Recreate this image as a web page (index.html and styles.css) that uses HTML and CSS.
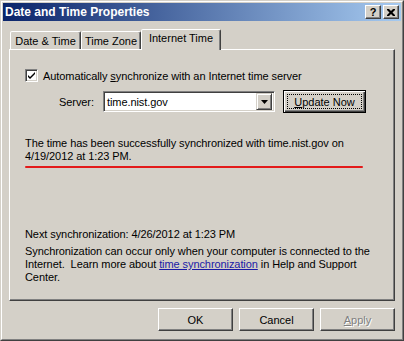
FILE: index.html
```
<!DOCTYPE html>
<html lang="en">
  <head>
    <meta charset="UTF-8" />
    <meta name="viewport" content="width=device-width, initial-scale=1.0" />
    <title>Date and Time Properties</title>
    <link rel="stylesheet" href="styles.css">
  </head>

  <body>
    <div class="window">
      <div class="frame">
        <div class="titlebar">
          <span class="title">Date and Time Properties</span>
          <div class="title-btns">
            <span class="tbtn help">?</span>
            <span class="tbtn">
              <svg width="8" height="7" viewBox="0 0 8 7">
                <path d="M0 0h2l2 2 2-2h2v1l-2.5 2.5L8 6v1H6L4 5 2 7H0V6l2.5-2.5L0 1z" fill="#000" />
              </svg>
            </span>
          </div>
        </div>

        <div class="content">
          <div class="tabs">
            <div class="tab tab-date">Date &amp; Time</div>
            <div class="tab tab-zone">Time Zone</div>
            <div class="tab tab-net active">Internet Time</div>
          </div>

          <div class="panel">
            <div class="check-row">
              <span class="checkbox">
                <svg width="7" height="7" viewBox="0 0 7 7">
                  <path d="M0 2l2 2 5-5v2L2 6 0 4z" fill="#000" transform="translate(0 1)" />
                </svg>
              </span>
              <span>Automatically <u>s</u>ynchronize with an Internet time server</span>
            </div>

            <div class="server-row">
              <span class="label">Server:</span>
              <div class="combo">
                <span class="combo-text">time.nist.gov</span>
                <span class="combo-btn">
                  <svg width="7" height="4" viewBox="0 0 7 4">
                    <path d="M0 0h7L3.5 4z" fill="#000" />
                  </svg>
                </span>
              </div>
              <button class="btn focused"><u>U</u>pdate Now</button>
            </div>

            <p class="status">
              The time has been successfully synchronized with time.nist.gov on<br />
              4/19/2012 at 1:23 PM.
            </p>
            <div class="red-line"></div>

            <p class="next">Next synchronization: 4/26/2012 at 1:23 PM</p>
            <p class="note">
              Synchronization can occur only when your computer is connected to the<br />
              Internet.&nbsp; Learn more about <a href="#">time synchronization</a> in Help and Support<br />
              Center.
            </p>
          </div>

          <div class="actions">
            <button class="btn">OK</button>
            <button class="btn">Cancel</button>
            <button class="btn disabled"><u>A</u>pply</button>
          </div>
        </div>
      </div>
    </div>
  </body>
</html>
```

FILE: styles.css
```
body {
  margin: 0;
  background-color: #d4d0c8;
  font-family: "Liberation Sans", Arial, sans-serif;
  font-size: 11px;
  color: #000;
}

.window {
  box-sizing: border-box;
  width: 404px;
  height: 341px;
  border: 1px solid;
  border-color: #d4d0c8 #404040 #404040 #d4d0c8;
}

.frame {
  box-sizing: border-box;
  height: 100%;
  padding: 1px;
  border: 1px solid;
  border-color: #fff #808080 #808080 #fff;
  display: flex;
  flex-direction: column;
}

.titlebar {
  height: 18px;
  display: flex;
  align-items: center;
  justify-content: space-between;
  padding-left: 2px;
  background: linear-gradient(to right, #0a246a, #a6caf0);
}

.title {
  color: #fff;
  font-weight: bold;
  font-size: 12px;
}

.title-btns {
  display: flex;
  gap: 2px;
  margin-right: 2px;
}

.tbtn {
  box-sizing: border-box;
  width: 16px;
  height: 14px;
  display: flex;
  align-items: center;
  justify-content: center;
  background-color: #d4d0c8;
  border: 1px solid;
  border-color: #fff #404040 #404040 #fff;
  box-shadow: inset -1px -1px 0 #808080;
  font-weight: bold;
  font-size: 11px;
  line-height: 1;
}

.content {
  flex: 1;
  padding: 8px 6px 0 6px;
  display: flex;
  flex-direction: column;
}

.tabs {
  display: flex;
  align-items: flex-end;
  height: 20px;
  padding-left: 1px;
}

.tab {
  box-sizing: border-box;
  height: 18px;
  padding-top: 3px;
  text-align: center;
  border: 1px solid;
  border-bottom: none;
  border-color: #fff #404040 transparent #fff;
  border-radius: 2px 2px 0 0;
  box-shadow: inset -1px 0 0 #808080;
  background-color: #d4d0c8;
}

.tab-date {
  width: 71px;
}

.tab-zone {
  width: 60px;
}

.tab-net {
  width: 80px;
}

.tab.active {
  position: relative;
  z-index: 1;
  height: 21px;
  margin-bottom: -1px;
  padding-top: 2px;
}

.panel {
  box-sizing: border-box;
  height: 252px;
  padding: 19px 15px 0 15px;
  border: 1px solid;
  border-color: #fff #404040 #404040 #fff;
  box-shadow: inset -1px -1px 0 #808080;
  letter-spacing: -0.08px;
}

.check-row {
  display: flex;
  align-items: center;
  gap: 5px;
  height: 13px;
}

.checkbox {
  box-sizing: border-box;
  width: 13px;
  height: 13px;
  display: flex;
  align-items: center;
  justify-content: center;
  background-color: #fff;
  border: 1px solid;
  border-color: #808080 #fff #fff #808080;
  box-shadow: inset 1px 1px 0 #404040, inset -1px -1px 0 #d4d0c8;
}

.server-row {
  display: flex;
  align-items: center;
  margin-top: 8px;
  padding-left: 34px;
}

.label {
  width: 44px;
}

.combo {
  box-sizing: border-box;
  width: 172px;
  height: 21px;
  display: flex;
  align-items: center;
  justify-content: space-between;
  padding: 2px;
  background-color: #fff;
  border: 1px solid;
  border-color: #808080 #fff #fff #808080;
  box-shadow: inset 1px 1px 0 #404040, inset -1px -1px 0 #d4d0c8;
}

.combo-text {
  padding-left: 1px;
}

.combo-btn {
  box-sizing: border-box;
  width: 16px;
  height: 17px;
  display: flex;
  align-items: center;
  justify-content: center;
  background-color: #d4d0c8;
  border: 1px solid;
  border-color: #d4d0c8 #404040 #404040 #d4d0c8;
  box-shadow: inset 1px 1px 0 #fff, inset -1px -1px 0 #808080;
}

.btn {
  box-sizing: border-box;
  height: 23px;
  padding: 0;
  font-family: inherit;
  font-size: 11px;
  color: #000;
  background-color: #d4d0c8;
  border: 1px solid;
  border-color: #fff #404040 #404040 #fff;
  box-shadow: inset -1px -1px 0 #808080;
}

.btn.focused {
  width: 83px;
  margin-left: 8px;
  border: 1px solid #000;
  box-shadow: inset 1px 1px 0 #fff, inset -1px -1px 0 #404040, inset -2px -2px 0 #808080;
  outline: 1px dotted #000;
  outline-offset: -5px;
}

.status {
  margin: 24px 0 0 0;
  line-height: 13px;
}

.red-line {
  width: 338px;
  height: 2px;
  margin-top: 3px;
  background-color: #e31a1a;
  border-radius: 1px;
}

.next {
  margin: 60px 0 0 0;
  line-height: 13px;
}

.note {
  margin: 4px 0 0 0;
  line-height: 13px;
}

.note a {
  color: #1a1aa6;
}

.actions {
  display: flex;
  justify-content: flex-end;
  gap: 6px;
  margin-top: 7px;
}

.actions .btn {
  width: 75px;
}

.btn.disabled {
  color: #808080;
  text-shadow: 1px 1px 0 #fff;
}
```
